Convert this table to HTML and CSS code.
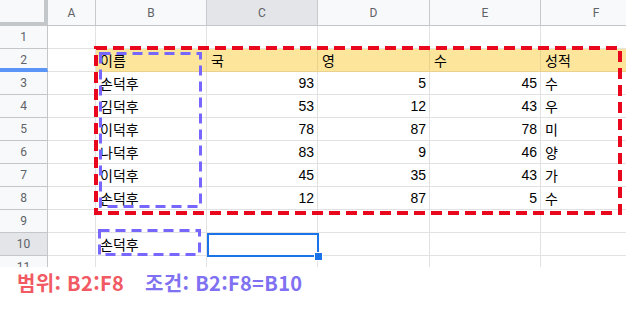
FILE: index.html
```html
<!DOCTYPE html>
<html lang="ko">
<head>
<meta charset="utf-8">
<link rel="stylesheet" href="styles.css">
</head>
<body>
<div class="sheet-wrap">
  <div class="sheet">
    <div class="corner"></div>
    <div class="ch">A</div><div class="ch">B</div><div class="ch sel">C</div><div class="ch">D</div><div class="ch">E</div><div class="ch">F</div>

    <div class="rh">1</div><div class="c"></div><div class="c"></div><div class="c"></div><div class="c"></div><div class="c"></div><div class="c"></div>

    <div class="rh freeze">2</div><div class="c"></div><div class="c y">이름</div><div class="c y">국</div><div class="c y">영</div><div class="c y">수</div><div class="c y">성적</div>

    <div class="rh">3</div><div class="c"></div><div class="c">손덕후</div><div class="c n">93</div><div class="c n">5</div><div class="c n">45</div><div class="c">수</div>
    <div class="rh">4</div><div class="c"></div><div class="c">김덕후</div><div class="c n">53</div><div class="c n">12</div><div class="c n">43</div><div class="c">우</div>
    <div class="rh">5</div><div class="c"></div><div class="c">이덕후</div><div class="c n">78</div><div class="c n">87</div><div class="c n">78</div><div class="c">미</div>
    <div class="rh">6</div><div class="c"></div><div class="c">나덕후</div><div class="c n">83</div><div class="c n">9</div><div class="c n">46</div><div class="c">양</div>
    <div class="rh">7</div><div class="c"></div><div class="c">이덕후</div><div class="c n">45</div><div class="c n">35</div><div class="c n">43</div><div class="c">가</div>
    <div class="rh">8</div><div class="c"></div><div class="c">손덕후</div><div class="c n">12</div><div class="c n">87</div><div class="c n">5</div><div class="c">수</div>
    <div class="rh">9</div><div class="c"></div><div class="c"></div><div class="c"></div><div class="c"></div><div class="c"></div><div class="c"></div>
    <div class="rh sel">10</div><div class="c"></div><div class="c">손덕후</div><div class="c"></div><div class="c"></div><div class="c"></div><div class="c"></div>
    <div class="rh">11</div><div class="c"></div><div class="c"></div><div class="c"></div><div class="c"></div><div class="c"></div><div class="c"></div>
  </div>

  <svg class="marks" width="626" height="267" viewBox="0 0 626 267">
    <rect x="96" y="48" width="524" height="165" fill="none" stroke="#e8071c" stroke-width="4" stroke-dasharray="11 6"/>
    <rect x="100.5" y="53.5" width="100" height="153" fill="none" stroke="#7766ff" stroke-width="3" stroke-dasharray="10 6"/>
    <rect x="99.5" y="230.5" width="100" height="24" fill="none" stroke="#7766ff" stroke-width="3" stroke-dasharray="10 6"/>
  </svg>
  <div class="selection"><span class="handle"></span></div>
</div>
<p class="caption"><span class="range">범위: B2:F8</span><span class="cond">조건: B2:F8=B10</span></p>
</body>
</html>
```
FILE: styles.css
```css
* { box-sizing: border-box; }
html, body { margin: 0; padding: 0; background: #fff; }
body { width: 626px; height: 310px; overflow: hidden; }

.sheet-wrap {
  position: relative;
  width: 626px;
  height: 267px;
  overflow: hidden;
}

.sheet {
  display: grid;
  grid-template-columns: 48px 48px 111px 111px 112px 111px 111px;
  grid-template-rows: 26px repeat(11, 23px);
  font-family: "Liberation Sans", "Noto Sans CJK KR", sans-serif;
  font-size: 14px;
  color: #000;
}

.corner {
  background: #f8f9fa;
  border-right: 4px solid #c4c7c9;
  border-bottom: 4px solid #c4c7c9;
}

.ch {
  background: #f8f9fa;
  border-right: 1px solid #c7c9cc;
  border-bottom: 1px solid #c4c7c9;
  display: flex;
  align-items: center;
  justify-content: center;
  font-family: "Roboto", "Liberation Sans", sans-serif;
  font-size: 12px;
  color: #5f6368;
  padding-top: 1px;
}

.rh {
  background: #f8f9fa;
  border-right: 1px solid #c4c7c9;
  border-bottom: 1px solid #c4c7c9;
  display: flex;
  align-items: center;
  justify-content: center;
  font-family: "Roboto", "Liberation Sans", sans-serif;
  font-size: 12px;
  color: #5f6368;
}

.ch.sel, .rh.sel { background: #e3e5e8; }

.rh.freeze { border-bottom: 4px solid #5b95f7; padding-top: 3px; }

.c {
  border-right: 1px solid #e2e2e2;
  border-bottom: 1px solid #e2e2e2;
  display: flex;
  align-items: flex-end;
  padding: 0 3px 3px 4px;
  line-height: 16px;
  white-space: nowrap;
  font-family: "Noto Sans CJK KR", "Liberation Sans", sans-serif;
}

.c.n {
  justify-content: flex-end;
  font-family: "Liberation Sans", sans-serif;
  padding-right: 3px;
}

.c.y {
  background: #fde59c;
  border-right-color: #e9d28e;
  border-bottom-color: #e9d28e;
}

.marks {
  position: absolute;
  left: 0;
  top: 0;
  pointer-events: none;
}

.selection {
  position: absolute;
  left: 207px;
  top: 233px;
  width: 112px;
  height: 24px;
  border: 2px solid #1a73e8;
}

.handle {
  position: absolute;
  right: -5px;
  bottom: -5px;
  width: 7px;
  height: 7px;
  background: #1a73e8;
  outline: 1px solid #fff;
}

.caption {
  margin: 0;
  padding-left: 17px;
  padding-top: 1px;
  height: 43px;
  font-family: "Noto Sans CJK KR", "Noto Sans", sans-serif;
  font-weight: 700;
  font-size: 20px;
  line-height: 30px;
  letter-spacing: 0.3px;
  display: flex;
  gap: 21px;
  white-space: nowrap;
}

.range { color: #f25a63; }
.cond { color: #8071f2; }
```
